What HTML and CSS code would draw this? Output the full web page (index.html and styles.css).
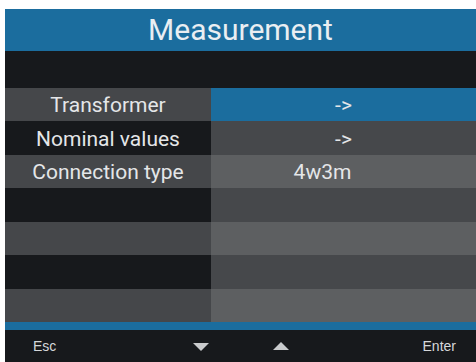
FILE: index.html
```html
<!DOCTYPE html>
<html>
<head>
  <title>Measurement</title>
  <link rel="stylesheet" href="styles.css">
</head>
<body>
  <div class="screen">
    <div class="title">Measurement</div>
    <div class="spacer"></div>
    <div class="menu">
      <div class="cell label light">Transformer</div>
      <div class="cell value selected">-&gt;</div>
      <div class="cell label dark">Nominal values</div>
      <div class="cell value mid">-&gt;</div>
      <div class="cell label light">Connection type</div>
      <div class="cell value pale shift">4w3m</div>
      <div class="cell label dark"></div>
      <div class="cell value mid"></div>
      <div class="cell label light"></div>
      <div class="cell value pale"></div>
      <div class="cell label dark"></div>
      <div class="cell value mid"></div>
      <div class="cell label light"></div>
      <div class="cell value pale"></div>
    </div>
    <div class="divider"></div>
    <div class="footer">
      <span class="key">Esc</span>
      <span class="arrow down"></span>
      <span></span>
      <span class="arrow up"></span>
      <span class="key enter">Enter</span>
    </div>
  </div>
</body>
</html>
```

FILE: styles.css
```css
body {
  margin: 0;
  padding: 9px 0 0 5px;
  background-color: #fff;
  font-family: Roboto, "Liberation Sans", sans-serif;
}
.screen {
  width: 471px;
  height: 353px;
  display: flex;
  flex-direction: column;
  background-color: #17191c;
}
.title {
  height: 42px;
  line-height: 42px;
  text-align: center;
  font-size: 30px;
  color: #e9eef2;
  background-color: #1b6d9e;
}
.spacer {
  height: 37px;
  background-color: #17191c;
}
.menu {
  height: 234px;
  display: grid;
  grid-template-columns: 206px 1fr;
  grid-template-rows: repeat(7, 1fr);
}
.cell {
  display: flex;
  align-items: center;
  justify-content: center;
  padding-top: 1px;
  font-size: 21px;
  color: #e4e6e8;
}
.label.light {
  background-color: #45474a;
}
.label.dark {
  background-color: #17191c;
}
.value.selected {
  background-color: #1b6d9e;
}
.value.mid {
  background-color: #46484b;
}
.value.pale {
  background-color: #5d5f61;
}
.value.shift {
  padding-right: 42px;
}
.divider {
  height: 8px;
  background-color: #1b6d9e;
}
.footer {
  flex: 1;
  display: grid;
  grid-template-columns: 160px 17px 63px 17px 1fr;
  align-items: center;
  padding: 0 20px 0 28px;
  font-family: "Liberation Sans", Arial, sans-serif;
  font-size: 14px;
  color: #d6d8da;
}
.enter {
  text-align: right;
}
.arrow {
  width: 0;
  height: 0;
  border-left: 8px solid transparent;
  border-right: 8px solid transparent;
}
.arrow.down {
  border-top: 8px solid #c9cbcd;
  margin-top: 2px;
}
.arrow.up {
  border-bottom: 8px solid #c9cbcd;
}
```
